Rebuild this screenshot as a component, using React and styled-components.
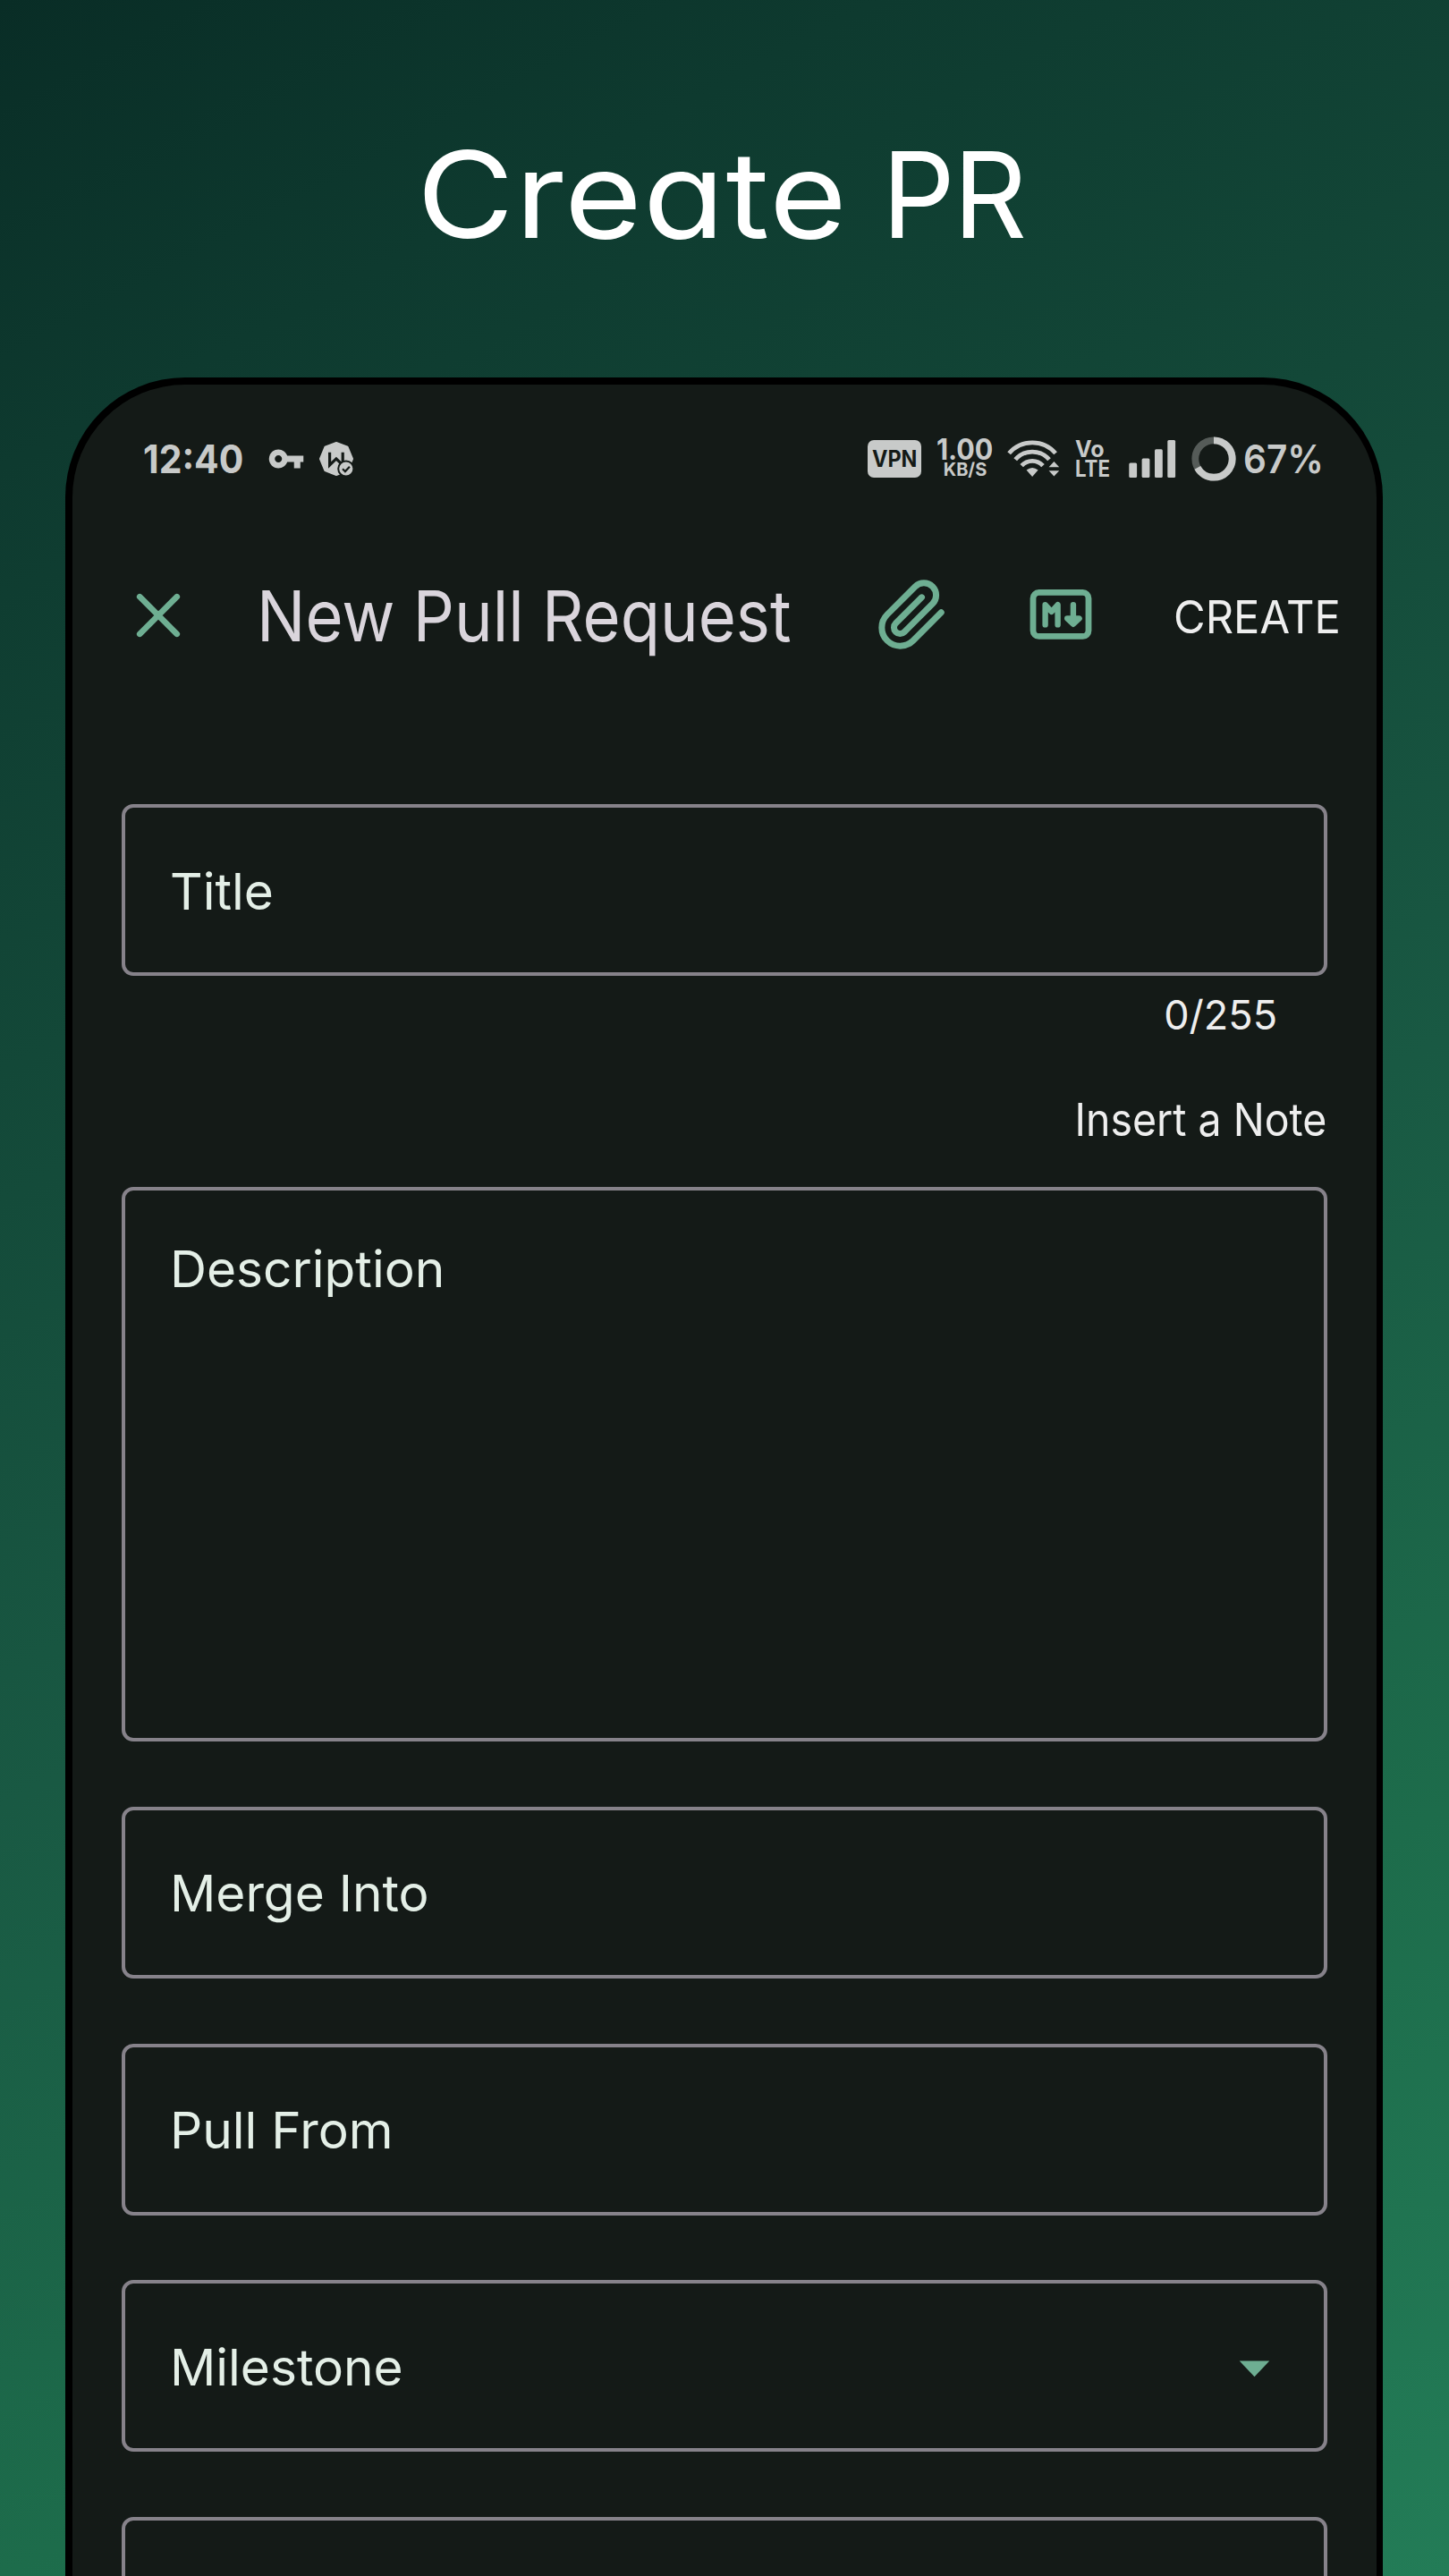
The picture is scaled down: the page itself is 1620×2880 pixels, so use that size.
import React from "react";
import styled, { createGlobalStyle } from "styled-components";

const colors = {
  surface: "#141a17",
  status: "#c8cac9",
  statusDim: "#555b58",
  accent: "#6eae92",
  outline: "#86828a",
  heading: "#dad5dc",
  label: "#e4efe7",
  text: "#eeeeee",
};

const GlobalStyle = createGlobalStyle`
  *, *::before, *::after { box-sizing: border-box; }
  body {
    margin: 0;
    font-family: Inter, "Liberation Sans", sans-serif;
  }
`;

const Poster = styled.main`
  display: flex;
  flex-direction: column;
  width: 1620px;
  height: 2880px;
  overflow: hidden;
  background: linear-gradient(
    152deg,
    #092d26 0%,
    #0e3a2f 14%,
    #195943 54%,
    #1d6c4b 77%,
    #237c57 100%
  );
`;

const Headline = styled.h1`
  display: flex;
  margin: 0;
  height: 422px;
  padding: 137px 0 0 466px;
  color: #fff;
  font-weight: 400;
  font-feature-settings: "cv11";
`;

const Phone = styled.section`
  flex: 1;
  margin: 0 74px 0 73px;
  border: 8px solid #000;
  border-right-width: 7px;
  border-bottom: 0;
  border-radius: 134px 134px 0 0;
  background: ${colors.surface};
  overflow: hidden;
`;

const Row = styled.div`
  display: flex;
  align-items: center;
`;

const StatusBar = styled(Row)`
  height: 166px;
  padding: 0 61px 0 79px;
  color: ${colors.status};
`;

const AppBar = styled(Row)`
  height: 184px;
  padding: 0 40px 0 71px;
`;

const Slot = styled.div`
  flex: none;
  display: flex;
  justify-content: ${(p) => p.$align || "flex-start"};
  width: ${(p) => p.$w}px;
  margin-left: ${(p) => p.$gap || 0}px;
  padding-top: ${(p) => p.$top || 0}px;
`;

const Text = styled.span`
  flex: none;
  color: ${(p) => p.$color || "inherit"};
  font-size: ${(p) => p.$size}px;
  font-weight: ${(p) => p.$weight || 400};
  line-height: ${(p) => p.$line || 60}px;
  letter-spacing: ${(p) => p.$tracking || 0}px;
  white-space: nowrap;
  transform: scaleX(${(p) => p.$stretch || 1});
  transform-origin: ${(p) => p.$origin || "left"} center;
`;

const Icon = styled.svg`
  flex: none;
  display: block;
  margin-left: ${(p) => p.$gap || 0}px;
`;

const Spacer = styled.div`
  flex: 1;
`;

const VpnBadge = styled.div`
  display: flex;
  align-items: center;
  justify-content: center;
  width: 60px;
  height: 42px;
  border-radius: 7px;
  background: ${colors.status};
  color: ${colors.surface};
`;

const Stack = styled.div`
  display: flex;
  flex-direction: column;
  align-items: ${(p) => p.$align};
  width: ${(p) => p.$w}px;
  margin-left: ${(p) => p.$gap}px;
  padding-top: ${(p) => p.$top || 0}px;
`;

const Form = styled.form`
  display: flex;
  flex-direction: column;
  padding: 119px 55px 0;
`;

const Field = styled.div`
  flex: none;
  display: flex;
  align-items: ${(p) => (p.$multiline ? "flex-start" : "center")};
  justify-content: space-between;
  height: ${(p) => (p.$multiline ? 620 : 192)}px;
  margin-top: ${(p) => p.$gap || 0}px;
  padding: ${(p) => (p.$multiline ? "58px" : "3px")} 60px 0 50px;
  border: 4px solid ${colors.outline};
  border-radius: 13px;
`;

const Helper = styled.div`
  display: flex;
  justify-content: flex-end;
  height: 60px;
  margin-top: ${(p) => p.$top}px;
  padding-right: ${(p) => p.$inset}px;
`;

const KeyIcon = () => (
  <Icon $gap={27} width="42" height="42" viewBox="0 0 24 24" fill={colors.status}>
    <path d="M12.65 10C11.83 7.67 9.61 6 7 6c-3.31 0-6 2.69-6 6s2.69 6 6 6c2.61 0 4.83-1.67 5.65-4H17v4h4v-4h2v-4H12.65zM7 14.3c-1.27 0-2.3-1.03-2.3-2.3s1.03-2.3 2.3-2.3 2.3 1.03 2.3 2.3-1.03 2.3-2.3 2.3z" />
  </Icon>
);

const BadgeIcon = () => (
  <Icon $gap={15} width="40" height="40" viewBox="0 0 40 40" fill="none">
    <path
      d="M20 2 32.6 6.8 38 20 32.6 33 20 38 7.4 33 2 20 7.4 6.8Z"
      fill={colors.status}
      stroke={colors.status}
      strokeWidth="2"
      strokeLinejoin="round"
    />
    <path d="M12.6 12.7v14.2l7.3-7 7.3 7V12.7" stroke={colors.surface} strokeWidth="3.2" />
    <circle cx="30.8" cy="31" r="8.6" fill={colors.status} stroke={colors.surface} strokeWidth="2" />
    <path d="m27 31.2 2.9 2.9 5-5.4" stroke={colors.surface} strokeWidth="2.2" />
  </Icon>
);

const WifiIcon = () => (
  <Icon $gap={15} width="60" height="44" viewBox="0 0 60 44" fill="none">
    <g stroke={colors.status} strokeWidth="4.8">
      <path d="M2.1 15.8A34.2 34.2 0 0 1 54.1 15.8" />
      <path d="M9.2 22.8A24.8 24.8 0 0 1 47 22.8" />
      <path d="M16.2 29.6A16 16 0 0 1 40 29.6" />
    </g>
    <path d="M21.6 34.6Q28.1 29.4 34.6 34.6L28.1 42Z" fill={colors.status} />
    <path d="M46.6 31.2 52.4 25l5.8 6.2ZM46.6 35.2h11.6l-5.8 6.2Z" fill={colors.status} />
  </Icon>
);

const SignalIcon = () => (
  <Icon $gap={22} width="53" height="42" viewBox="0 0 53 42" fill={colors.status}>
    <rect x="0.3" y="25.5" width="8.8" height="16.5" rx="1.5" />
    <rect x="14.6" y="20.5" width="8.8" height="21.5" rx="1.5" />
    <rect x="29" y="10.2" width="8.8" height="31.8" rx="1.5" />
    <rect x="43.3" y="0" width="8.8" height="42" rx="1.5" />
  </Icon>
);

const BatteryRing = () => (
  <Icon $gap={17} width="50" height="50" viewBox="0 0 50 50" fill="none" strokeWidth="7.8">
    <circle cx="25" cy="25" r="20.7" stroke={colors.statusDim} />
    <circle
      cx="25"
      cy="25"
      r="20.7"
      stroke={colors.status}
      pathLength="100"
      strokeDasharray="67 33"
      transform="rotate(-90 25 25)"
    />
  </Icon>
);

const CloseIcon = () => (
  <Icon width="50" height="50" viewBox="0 0 50 50" stroke={colors.accent} strokeWidth="6.6" strokeLinecap="round">
    <path d="M4.2 4.2l41.6 41.6M45.8 4.2L4.2 45.8" />
  </Icon>
);

const PaperclipIcon = () => (
  <Icon
    $gap={94}
    width="82"
    height="82"
    viewBox="0 0 24 24"
    fill="none"
    stroke={colors.accent}
    strokeWidth="2.05"
    strokeLinecap="round"
    strokeLinejoin="round"
  >
    <path d="M21.44 11.05l-9.19 9.19a6 6 0 0 1-8.49-8.49l9.19-9.19a4 4 0 0 1 5.66 5.66l-9.2 9.19a2 2 0 0 1-2.83-2.83l8.49-8.48" />
  </Icon>
);

const MarkdownIcon = () => (
  <Icon
    $gap={90}
    width="70"
    height="58"
    viewBox="0 0 70 58"
    fill="none"
    stroke={colors.accent}
    strokeWidth="6.4"
    strokeLinecap="round"
    strokeLinejoin="round"
  >
    <rect x="4" y="3.4" width="62" height="49" rx="6.5" strokeWidth="6.8" />
    <path d="M17.6 39.4V17.2l7 7.6 7-7.6v22.2" />
    <path d="M48.9 17.2v20" />
    <path d="M42.2 32.4l6.7 6.4 6.7-6.4Z" fill={colors.accent} />
  </Icon>
);

const DropdownIcon = () => (
  <Icon width="35" height="24" viewBox="0 0 35 24" fill={colors.accent}>
    <path d="M.7 4.5h33.6L17.5 22.2Z" />
  </Icon>
);

const Label = ({ children }) => (
  <Text $size={56.8} $color={colors.label}>
    {children}
  </Text>
);

export default function App() {
  return (
    <>
      <GlobalStyle />
      <Poster>
        <Headline>
          <Slot $w={520}>
            <Text $size={134} $line={161} $tracking={1.25} $stretch={1.11}>Create</Text>
          </Slot>{" "}
          <Slot $w={170}>
            <Text $size={134} $line={161} $tracking={-2} $stretch={0.955}>PR</Text>
          </Slot>
        </Headline>
        <Phone>
          <StatusBar>
            <Slot $w={112}>
              <Text $size={44} $weight={700} $stretch={0.93}>12:40</Text>
            </Slot>
            <KeyIcon />
            <BadgeIcon />
            <Spacer />
            <VpnBadge>
              <Slot $w={50}>
                <Text $size={25} $weight={700} $line={42} $stretch={0.935}>VPN</Text>
              </Slot>
            </VpnBadge>
            <Stack $align="center" $w={64} $gap={17} $top={2}>
              <Slot $w={64}>
                <Text $size={32} $weight={700} $line={23} $stretch={0.95}>1.00</Text>
              </Slot>
              <Text $size={20} $weight={700} $line={23}>KB/S</Text>
            </Stack>
            <WifiIcon />
            <Stack $align="flex-start" $w={38} $gap={16}>
              <Text $size={25} $weight={700} $line={22}>Vo</Text>
              <Text $size={25} $weight={700} $line={23} $stretch={0.89}>LTE</Text>
            </Stack>
            <SignalIcon />
            <BatteryRing />
            <Slot $w={88} $gap={8}>
              <Text $size={44} $weight={600} $stretch={0.92}>67%</Text>
            </Slot>
          </StatusBar>

          <AppBar>
            <CloseIcon />
            <Slot $w={598} $gap={85}>
              <Text $size={79} $line={96} $color={colors.heading} $stretch={0.915}>
                New Pull Request
              </Text>
            </Slot>
            <PaperclipIcon />
            <MarkdownIcon />
            <Slot $w={188} $gap={91} $top={4}>
              <Text $size={51} $line={64} $color={colors.text} $stretch={0.957}>
                CREATE
              </Text>
            </Slot>
          </AppBar>

          <Form>
            <Field>
              <Label>Title</Label>
            </Field>
            <Helper $top={14.3} $inset={56}>
              <Text $size={45} $color={colors.text}>0/255</Text>
            </Helper>
            <Helper $top={57} $inset={1}>
              <Text $size={51} $color={colors.text} $stretch={0.911} $origin="right">
                Insert a Note
              </Text>
            </Helper>
            <Field $multiline $gap={45.1}>
              <Label>Description</Label>
            </Field>
            <Field $gap={72.6}>
              <Label>Merge Into</Label>
            </Field>
            <Field $gap={72.6}>
              <Label>Pull From</Label>
            </Field>
            <Field $gap={72.6}>
              <Label>Milestone</Label>
              <DropdownIcon />
            </Field>
            <Field $gap={72.6} />
          </Form>
        </Phone>
      </Poster>
    </>
  );
}
